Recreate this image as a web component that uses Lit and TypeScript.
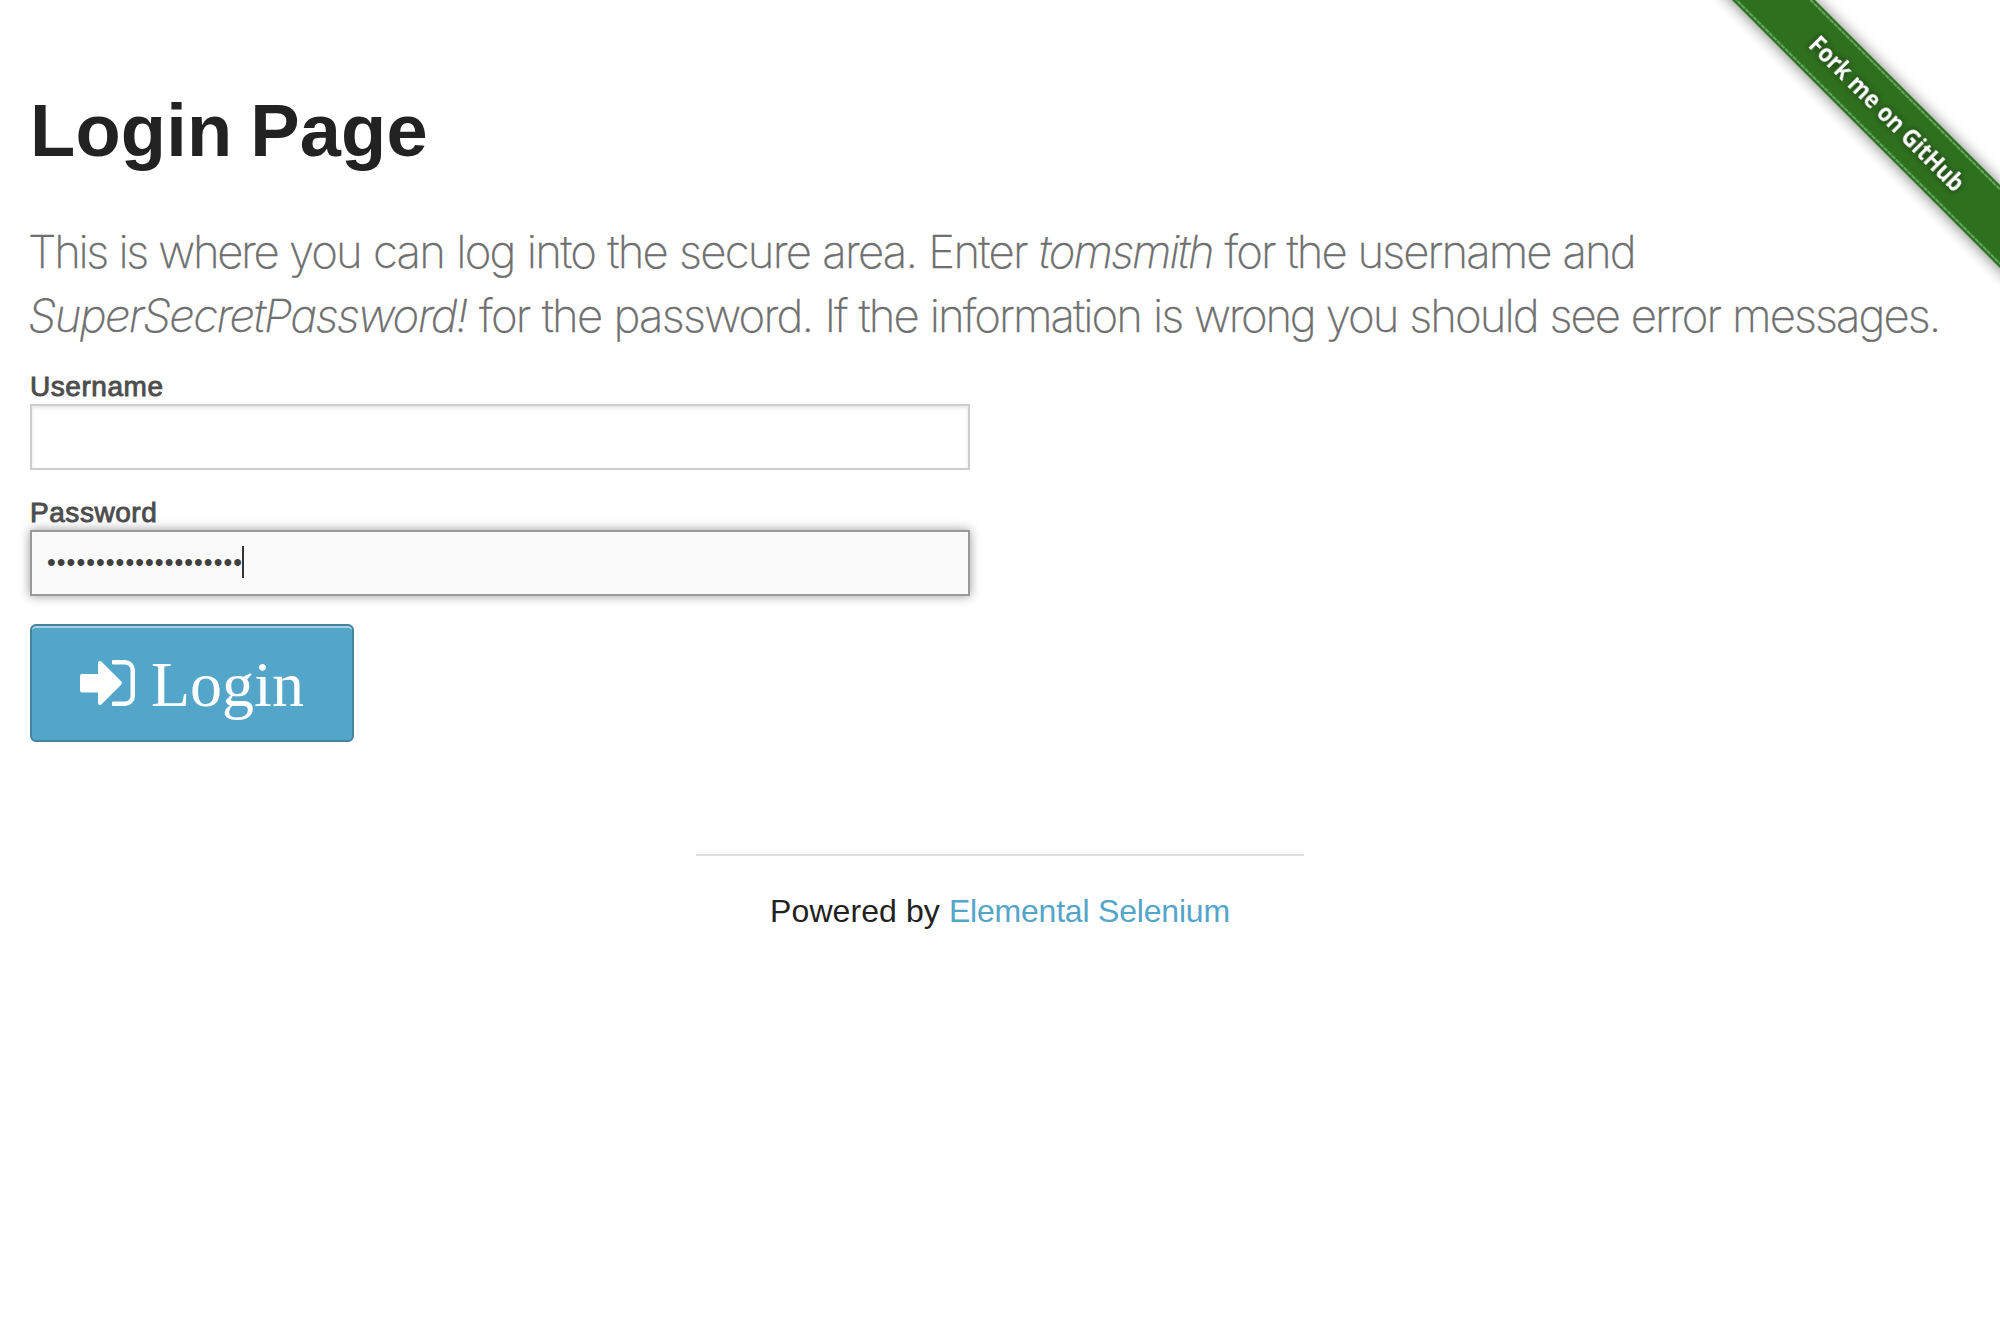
import { LitElement, html, css } from "lit";
import { customElement } from "lit/decorators.js";

@customElement("app-root")
export class AppRoot extends LitElement {
  static styles = css`
    :host {
      display: block;
      position: relative;
      overflow: hidden;
      height: 1320px;
      background: #fff;
      color: #222;
      font-family: "Liberation Sans", Arial, sans-serif;
    }
    * { box-sizing: border-box; }
    .page { padding: 79px 30px 0; }
    h2 {
      margin: 0;
      font-size: 74px;
      line-height: 104px;
      font-weight: 700;
      letter-spacing: 0.2px;
      word-spacing: -3px;
    }
    .sub {
      margin: 37px 0 0 -2px;
      font-family: Inter, "Liberation Sans", sans-serif;
      font-weight: 200;
      font-size: 45.5px;
      line-height: 64px;
      color: #6f6f6f;
      -webkit-text-stroke: 0.3px #6f6f6f;
      white-space: nowrap;
      letter-spacing: -1.95px;
      word-spacing: 1px;
    }
    .line { display: block; }
    .one em { letter-spacing: -2px; }
    .two em { letter-spacing: -1.65px; }
    .tight { letter-spacing: -2.35px; }
    .loose { letter-spacing: -1.77px; }
    .wide { letter-spacing: -1.77px; }
    .form { width: 940px; margin-top: 18px; }
    .label {
      display: block;
      height: 38px;
      font-size: 28px;
      line-height: 42px;
      color: #4d4d4d;
      -webkit-text-stroke: 0.9px #4d4d4d;
      letter-spacing: 0.55px;
    }
    .field {
      display: flex;
      align-items: center;
      height: 66px;
      padding: 0 14.5px;
      margin-bottom: 22px;
      border: 2px solid #ccc;
      font-size: 25px;
      color: #404040;
      box-shadow: inset 0 2px 4px rgba(0, 0, 0, 0.1);
    }
    .dots { letter-spacing: 1.05px; padding: 0 0 2px 0.5px; }
    .focus {
      background: #fafafa;
      border-color: #999;
      box-shadow: 0 0 10px #999;
      margin-bottom: 28px;
    }
    .caret { width: 2px; height: 32px; background: #333; margin: 0 0 2px -1.5px; }
    .button {
      display: flex;
      align-items: center;
      width: 324px;
      height: 118px;
      padding: 0 0 0 48px;
      border: 2px solid #4483a0;
      border-radius: 6px;
      background: #53a5c9;
      box-shadow: inset 0 2px 0 rgba(255, 255, 255, 0.5);
      color: #fff;
      font-family: "Liberation Serif", "Times New Roman", serif;
      font-size: 64px;
      line-height: 74px;
    }
    .icon { width: 56px; height: 46px; margin-right: 15px; }
    .login { padding-top: 4px; }
    .footer {
      width: 608px;
      margin: 112px auto 0;
      border-top: 2px solid #ddd;
      padding-top: 31px;
      text-align: center;
      font-size: 32px;
      line-height: 48px;
      white-space: nowrap;
    }
    .powered { letter-spacing: 0.08px; }
    a { color: #53a5c9; text-decoration: none; letter-spacing: -0.2px; }
    .ribbon { position: absolute; top: 0; right: 0; width: 300px; height: 300px; }
    .fork { font-family: "Noto Sans", "Open Sans", sans-serif; font-weight: 700; }
  `;

  render() {
    return html`
      <div class="page">
        <h2>Login Page</h2>
        <p class="sub">
          <span class="line one"><span class="tight">This is where </span><span class="loose">you can log into the secure area. Enter </span><em>tomsmith</em> for the username and</span>
          <span class="line two"><em>SuperSecretPassword!</em><span class="wide"> for the password. </span>If the information is <span class="tight">wrong </span>you should see error messages.</span>
        </p>
        <div class="form">
          <label class="label">Username</label>
          <div class="field"></div>
          <label class="label">Password</label>
          <div class="field focus"><span class="dots">${"•".repeat(20)}</span><i class="caret"></i></div>
          <div class="button">
            <svg class="icon" viewBox="0 0 56 46" fill="#fff">
              <path d="M2 14H18V3Q18 1 20 1Q21 1 21.6 1.7L41.4 21.6Q42.4 23 41.4 24.4L21.6 44.3Q21 45 20 45Q18 45 18 43V32.5H2Q0 32.5 0 30.5V16Q0 14 2 14Z" />
              <path d="M33 0H45A10 10 0 0 1 55 10V36A10 10 0 0 1 45 46H33Q32 46 32 45V42.5Q32 41.5 33 41.5H45A5.5 5.5 0 0 0 50.5 36V10A5.5 5.5 0 0 0 45 4.5H33Q32 4.5 32 3.5V1Q32 0 33 0Z" />
            </svg>
            <span class="login">Login</span>
          </div>
        </div>
        <div class="footer"><span class="powered">Powered by </span><a>Elemental Selenium</a></div>
      </div>
      <svg class="ribbon" viewBox="0 0 300 300">
        <defs>
          <filter id="shade" x="-20%" y="-60%" width="140%" height="220%"><feGaussianBlur stdDeviation="8" /></filter>
          <filter id="glow" x="-20%" y="-60%" width="140%" height="220%"><feGaussianBlur stdDeviation="3" /></filter>
          <filter id="soft" x="-10%" y="-30%" width="120%" height="160%"><feGaussianBlur stdDeviation="0.5" /></filter>
        </defs>
        <g transform="translate(187 113.5) rotate(45)">
          <rect x="-210" y="-28" width="420" height="57" fill="#000" opacity="0.55" filter="url(#shade)" />
          <rect x="-230" y="-29.3" width="460" height="58.6" fill="#2f701f" />
          <g stroke="#64a65c" stroke-width="2" stroke-dasharray="4.8 0.8">
            <path d="M-230 -26.2H230" /><path d="M-230 26.2H230" />
          </g>
          <g class="fork" font-size="25.5" text-anchor="middle">
            <text y="9" textLength="208" lengthAdjust="spacingAndGlyphs" fill="#000" opacity="0.6" filter="url(#glow)">Fork me on GitHub</text>
            <text y="9" textLength="208" lengthAdjust="spacingAndGlyphs" fill="#fff" filter="url(#soft)">Fork me on GitHub</text>
          </g>
        </g>
      </svg>
    `;
  }
}
